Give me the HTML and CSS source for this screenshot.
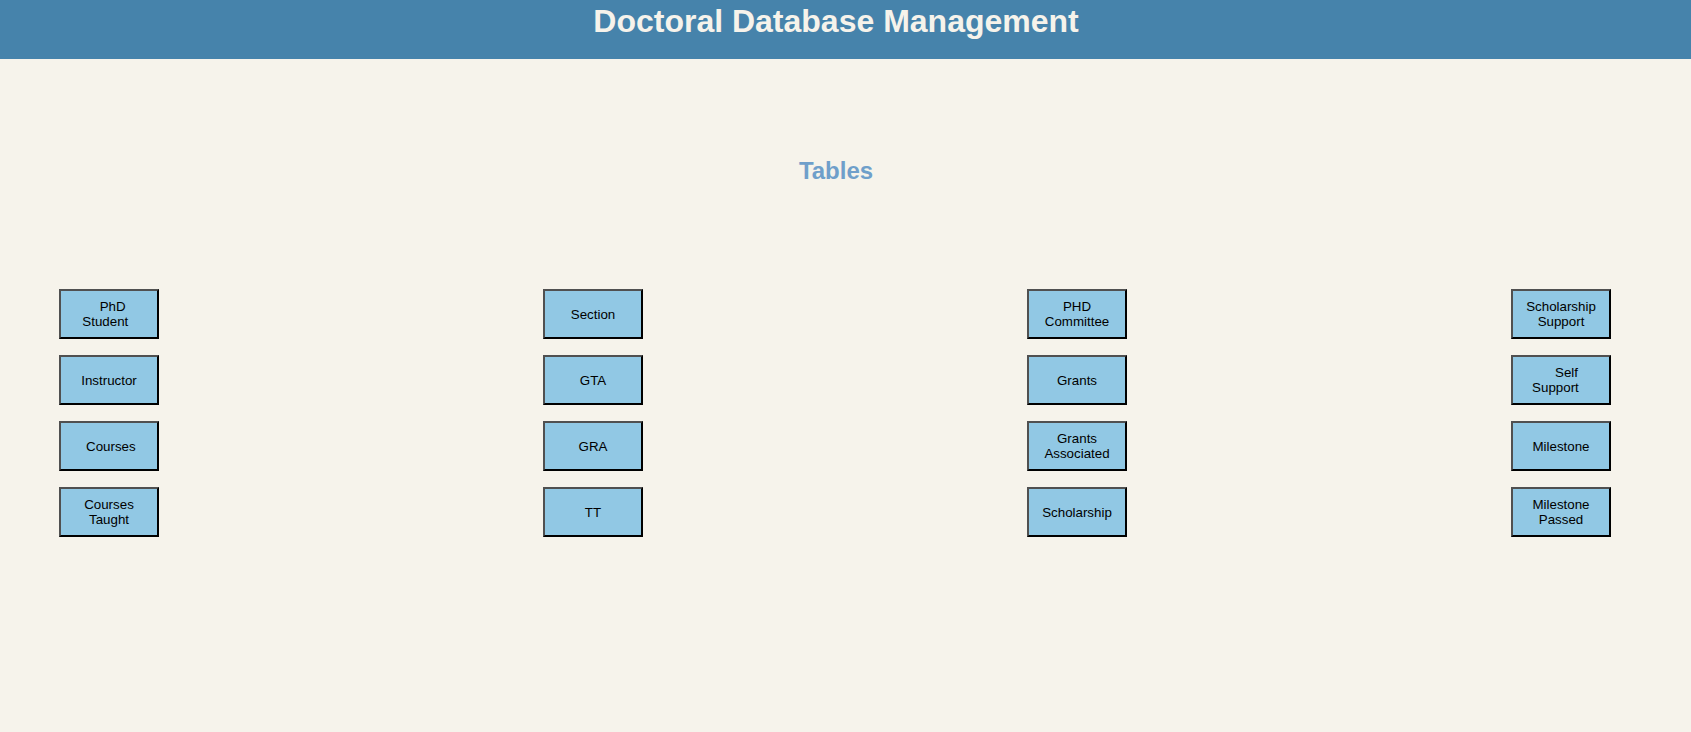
FILE: index.html
```html
<!DOCTYPE html>
<html lang="en">
<head>
  <meta charset="UTF-8" />
  <meta name="viewport" content="width=device-width, initial-scale=1.0"/>
  <title>Doctoral Database Management</title>
  <link rel="stylesheet" href="styles.css">
</head>
<body>

  <!-- Top bar -->
  <header class="top-bar">
    <h1>Doctoral Database Management</h1>
  </header>

  <main class="content">
    <h2 class="section-title">Tables</h2>

    <div class="table-grid">
      <div class="table-column">
        <button class="table-btn">&nbsp;&nbsp;PhD Student&nbsp;&nbsp;</button>
        <button class="table-btn">Instructor</button>
        <button class="table-btn">&nbsp;Courses</button>
        <button class="table-btn">Courses Taught</button>
      </div>
      <div class="table-column">
        <button class="table-btn">Section</button>
        <button class="table-btn">GTA</button>
        <button class="table-btn">GRA</button>
        <button class="table-btn">TT</button>
      </div>
      <div class="table-column">
        <button class="table-btn">PHD Committee</button>
        <button class="table-btn">Grants</button>
        <button class="table-btn">Grants Associated</button>
        <button class="table-btn">Scholarship</button>
      </div>
      <div class="table-column">
        <button class="table-btn">Scholarship Support</button>
        <button class="table-btn">&nbsp;&nbsp;&nbsp;Self Support&nbsp;&nbsp;&nbsp;</button>
        <button class="table-btn">Milestone</button>
        <button class="table-btn">Milestone Passed</button>
      </div>
    </div>
  </main>

</body>
</html>
```

FILE: styles.css
```css
* {
  box-sizing: border-box;
}

body {
  margin: 0;
  background-color: #f6f3eb;
  font-family: 'Liberation Sans', Arial, sans-serif;
}

.top-bar {
  background-color: #4683ab;
  padding: 3px 19px 19px 0;
  text-align: center;
}

.top-bar h1 {
  margin: 0;
  font-size: 32px;
  line-height: normal;
  color: #f6f3eb;
}

.content {
  padding-top: 98px;
}

.section-title {
  margin: 0;
  padding-right: 19px;
  text-align: center;
  font-size: 24px;
  line-height: normal;
  color: #6f9fca;
}

.table-grid {
  display: flex;
  gap: 384px;
  margin-top: 104px;
  padding-left: 59px;
}

.table-column {
  display: flex;
  flex-direction: column;
  gap: 16px;
}

.table-btn {
  width: 100px;
  height: 50px;
  padding: 1px 6px;
  background-color: #91c8e4;
  border: 2px solid;
  border-color: #505050 #000 #000 #505050;
  font-family: 'Liberation Sans', Arial, sans-serif;
  font-size: 13.33px;
  color: #000;
  cursor: pointer;
}
```
